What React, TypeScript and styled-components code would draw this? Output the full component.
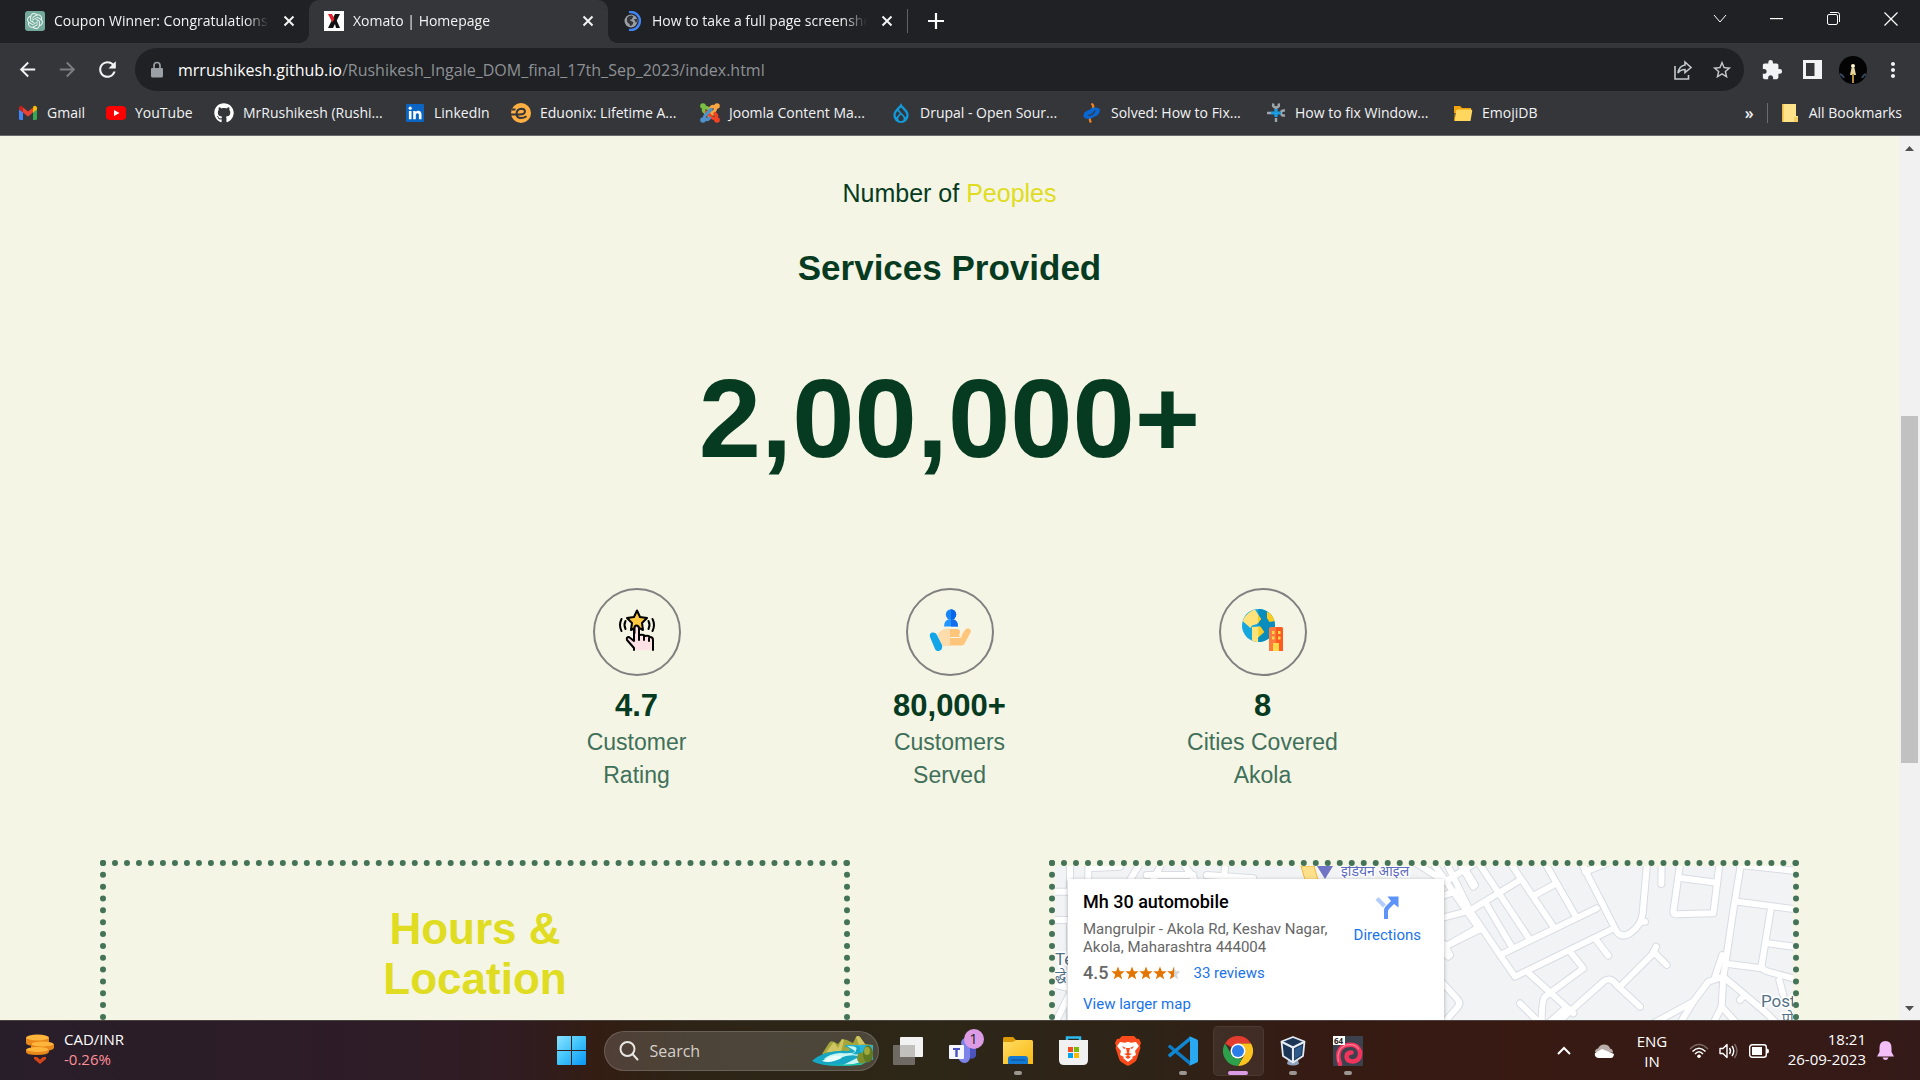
import React from 'react';
import styled, { createGlobalStyle } from 'styled-components';
import { SiOpenai, SiDrupal } from 'react-icons/si';
import { FaGithub } from 'react-icons/fa';
import { MdStarBorder, MdExtension, MdMoreVert, MdArrowBack, MdArrowForward, MdRefresh } from 'react-icons/md';

const Global = createGlobalStyle`
  * { box-sizing: border-box; }
  body { margin: 0; background: #f4f5e4; overflow: hidden; }
  button { border: 0; padding: 0; margin: 0; background: none; font: inherit; color: inherit; display: flex; align-items: center; justify-content: center; }
  input { border: 0; padding: 0; margin: 0; background: none; font: inherit; color: inherit; outline: 0; min-width: 0; }
  a { color: inherit; text-decoration: none; }
  h1, h2, h3, p { margin: 0; }
  svg { display: block; flex: none; }
`;

const ui = `"Open Sans", "Noto Sans", sans-serif`;
const sans = `"Liberation Sans", Arial, sans-serif`;

const Screen = styled.div`
  height: 100vh;
  display: flex;
  flex-direction: column;
  font-family: ${ui};
`;

/* ---------- browser chrome ---------- */
const TabStrip = styled.header`
  display: flex;
  height: 43px;
  padding-left: 10px;
  background: #202124;
  color: #f1f3f4;
  font-size: 14px;
`;
const Tab = styled.div<{ $active?: boolean }>`
  position: relative;
  display: flex;
  align-items: center;
  width: 299px;
  height: 43px;
  padding: 0 11px 2px 15px;
  gap: 9px;
  border-radius: 10px 10px 0 0;
  background: ${(p) => (p.$active ? '#35363a' : 'transparent')};
  &::before, &::after {
    content: ${(p) => (p.$active ? '""' : 'none')};
    position: absolute;
    bottom: 0;
    width: 10px;
    height: 10px;
  }
  &::before { left: -10px; background: radial-gradient(circle at 0 0, transparent 10px, #35363a 10px); }
  &::after { right: -10px; background: radial-gradient(circle at 100% 0, transparent 10px, #35363a 10px); }
`;
const TabTitle = styled.button`
  flex: 1;
  min-width: 0;
  overflow: hidden;
  white-space: nowrap;
  justify-content: flex-start;
  mask-image: linear-gradient(90deg, #000 calc(100% - 24px), transparent);
`;
const TabClose = styled.button`
  width: 18px;
  height: 18px;
  margin-left: 2px;
`;
const NewTab = styled.button`
  width: 56px;
  height: 41px;
`;
const TabDivider = styled.span`
  width: 1px;
  height: 24px;
  margin-top: 9px;
  background: #5f6368;
`;
const WindowControls = styled.div`
  display: flex;
  margin-left: auto;
  padding-right: 1px;
`;
const WindowButton = styled.button`
  width: 57px;
  height: 37px;
`;
const Toolbar = styled.div`
  display: flex;
  align-items: center;
  height: 53px;
  padding: 0 7px;
  background: #35363a;
  color: #f1f3f4;
`;
const ToolButton = styled.button<{ $dim?: boolean }>`
  width: 40px;
  height: 40px;
  color: ${(p) => (p.$dim ? '#7c7e82' : '#f1f3f4')};
`;
const Omnibox = styled.div`
  flex: 1;
  display: flex;
  align-items: center;
  height: 43px;
  margin: 0 8px;
  padding: 0 3px 0 13px;
  border-radius: 22px;
  background: #202124;
  color: #9aa0a6;
  font-size: 16px;
`;
const UrlHost = styled.label`
  margin-left: 12px;
  color: #fff;
`;
const UrlPath = styled.input`
  flex: 1;
  color: #8d9196;
`;
const OmniButton = styled.button`
  width: 39px;
  height: 40px;
  color: #c4c7cb;
`;
const Avatar = styled.button`
  width: 41px;
  height: 40px;
`;
const BookmarkBar = styled.nav`
  display: flex;
  align-items: center;
  height: 40px;
  padding: 0 18px 6px;
  background: #35363a;
  border-bottom: 1px solid #68696d;
  color: #f1f3f4;
  font-size: 14px;
  white-space: nowrap;
`;
const Bookmark = styled.a<{ $w?: number }>`
  display: flex;
  align-items: center;
  gap: 9px;
  width: ${(p) => (p.$w ? `${p.$w}px` : 'auto')};
`;
const Overflow = styled.button`
  margin-left: auto;
  font-size: 16px;
  font-weight: 600;
`;
const BarDivider = styled.span`
  width: 1px;
  height: 20px;
  margin: 0 13px;
  background: #6a6c70;
`;

/* ---------- page ---------- */
const Viewport = styled.div`
  flex: 1;
  min-height: 0;
  display: flex;
`;
const Page = styled.main`
  flex: 1;
  overflow: hidden;
  display: flex;
  flex-direction: column;
  align-items: center;
  padding: 42px 100px 0;
  background: #f4f5e4;
  color: #063b22;
  font-family: ${sans};
  text-align: center;
`;
const Lead = styled.p`
  font-size: 25px;
  line-height: 30px;
`;
const Accent = styled.span`
  color: #dfdc21;
`;
const Heading = styled.h2`
  margin-top: 40px;
  font-size: 35px;
  line-height: 40px;
`;
const Total = styled.p`
  margin-top: 67px;
  font-size: 112px;
  font-weight: 700;
  line-height: 128px;
`;
const Stats = styled.section`
  display: grid;
  grid-template-columns: repeat(3, 1fr);
  width: 939px;
  max-width: 100%;
  margin-top: 105px;
`;
const Stat = styled.article`
  display: flex;
  flex-direction: column;
  align-items: center;
`;
const Ring = styled.div`
  display: flex;
  align-items: center;
  justify-content: center;
  width: 88px;
  height: 88px;
  padding-bottom: 4px;
  border: 2px solid #808080;
  border-radius: 50%;
`;
const StatValue = styled.h3`
  margin: 12px 0 2px;
  font-size: 31px;
  line-height: 36px;
`;
const StatLabel = styled.p`
  color: #40705a;
  font-size: 23px;
  line-height: 33px;
`;
const Panels = styled.section`
  display: flex;
  align-self: stretch;
  gap: 199px;
  margin-top: 68px;
`;
const Panel = styled.div`
  flex: 1;
  min-width: 0;
  min-height: 480px;
  border: 6px dotted #457358;
`;
const PanelTitle = styled.h2`
  margin-top: 38px;
  color: #dfdc21;
  font-size: 44px;
  line-height: 50px;
`;
const MapPanel = styled(Panel)`
  position: relative;
  overflow: hidden;
  text-align: left;
  font-family: Roboto, sans-serif;
`;
const MapCard = styled.div`
  position: absolute;
  top: 13px;
  left: 13px;
  display: flex;
  justify-content: space-between;
  width: 376px;
  height: 160px;
  padding: 13px 23px 0 15px;
  background: #fff;
  box-shadow: 0 1px 4px rgba(0, 0, 0, 0.3);
  color: #666;
  font-size: 15px;
  line-height: 18px;
  white-space: nowrap;
`;
const PlaceName = styled.h3`
  margin-bottom: 8px;
  color: #000;
  font-size: 18px;
  font-weight: 500;
  line-height: 20px;
`;
const RatingRow = styled.div`
  display: flex;
  align-items: center;
  margin: 8px 0 13px;
`;
const Score = styled.span`
  margin-right: 3px;
  font-size: 18px;
  font-weight: 500;
`;
const MapLink = styled.a`
  color: #1a73e8;
`;
const Reviews = styled(MapLink)`
  margin-left: 12px;
`;
const Directions = styled(MapLink)`
  display: flex;
  flex-direction: column;
  align-items: center;
  gap: 6px;
  padding-top: 4px;
`;
const Scrollbar = styled.aside`
  display: flex;
  flex-direction: column;
  align-items: center;
  width: 21px;
  background: #f1f1f1;
`;
const ScrollArrow = styled.button`
  width: 21px;
  height: 24px;
`;
const ScrollTrack = styled.div`
  flex: 1;
  width: 17px;
  padding-top: 256px;
`;
const ScrollThumb = styled.div`
  height: 347px;
  background: #c1c1c1;
`;

/* ---------- taskbar ---------- */
const Taskbar = styled.footer`
  display: flex;
  align-items: center;
  justify-content: space-between;
  height: 60px;
  border-top: 1px solid #4a4340;
  background: linear-gradient(90deg, #281e29 0, #2e1c27 20%, #301c21 27%, #331d13 31%, #2d2416 36%, #2d2718 48%, #2e2317 60%, #351b13 68%, #381a13 80%, #341a18 100%);
  color: #fff;
  font-size: 15px;
  line-height: 20px;
`;
const Widget = styled.button`
  flex: 1 1 0;
  justify-content: flex-start;
  gap: 10px;
  padding: 0 0 4px 26px;
  text-align: left;
`;
const Drop = styled.span`
  color: #ff8e99;
`;
const Apps = styled.div`
  display: flex;
  align-items: center;
  padding-right: 2px;
`;
const AppButton = styled.button<{ $active?: boolean }>`
  position: relative;
  width: 51px;
  height: 50px;
  margin: 0 2px;
  border-radius: 5px;
  background: ${(p) => (p.$active ? 'rgba(255,255,255,0.07)' : 'none')};
  box-shadow: ${(p) => (p.$active ? 'inset 0 0 0 1px rgba(255,255,255,0.06)' : 'none')};
`;
const Running = styled.span<{ $active?: boolean }>`
  position: absolute;
  left: 50%;
  bottom: 1px;
  width: ${(p) => (p.$active ? 20 : 8)}px;
  height: 4px;
  border-radius: 2px;
  background: ${(p) => (p.$active ? '#dc9be5' : '#9b9690')};
  transform: translateX(-50%);
`;
const Badge = styled.span`
  position: absolute;
  top: 3px;
  right: 5px;
  width: 20px;
  height: 20px;
  border-radius: 50%;
  background: #dc9be5;
  color: #222;
  font-size: 14px;
  line-height: 20px;
  text-align: center;
`;
const SearchBox = styled.label`
  display: flex;
  align-items: center;
  width: 275px;
  height: 40px;
  margin: 0 2px 0 5px;
  padding: 0 4px 0 14px;
  gap: 11px;
  border: 1px solid rgba(255, 255, 255, 0.16);
  border-radius: 20px;
  background: rgba(255, 255, 255, 0.15);
`;
const SearchInput = styled.input`
  flex: 1;
  font-size: 16px;
  &::placeholder { color: #d4cfca; opacity: 1; }
`;
const Tray = styled.div`
  flex: 1 1 0;
  display: flex;
  align-items: center;
  justify-content: flex-end;
  padding-right: 25px;
`;
const TrayButton = styled.button<{ $w: number }>`
  width: ${(p) => p.$w}px;
  height: 40px;
  text-align: center;
`;
const Clock = styled.button`
  width: 92px;
  margin-right: 9px;
  padding-bottom: 4px;
  justify-content: flex-end;
  text-align: right;
  white-space: nowrap;
`;

/* ---------- drawings ---------- */
const Cross = () => (
  <svg width="12" height="12" viewBox="0 0 12 12" stroke="#f1f3f4" strokeWidth="2"><path d="M1.5 1.5l9 9M10.5 1.5l-9 9" /></svg>
);
const LockIcon = () => (
  <svg width="18" height="18" viewBox="0 0 18 18"><path d="M4 7h10q1 0 1 1v7q0 1.500-1.500 1.500h-9Q3 16.500 3 15V8q0-1 1-1z" fill="#9aa0a6" /><path d="M6 7V4.500q0-3 3-3t3 3V7" fill="none" stroke="#9aa0a6" strokeWidth="1.700" /></svg>
);
const OpenAiIcon = () => (
  <svg width="20" height="20" viewBox="0 0 20 20"><rect width="20" height="20" rx="3" fill="#74aa9c" /><SiOpenai x="2" y="2" size={16} color="#e6f4f0" /></svg>
);
const XomatoIcon = () => (
  <svg width="20" height="20" viewBox="0 0 20 20"><rect width="20" height="20" fill="#fff" /><path d="M11 3h5L9 17H4z" fill="#111" /><path d="M10 9l2-1 4 9h-4z" fill="#111" /><path d="M4 3h4l2.400 5-2 3.400z" fill="#e5202a" /></svg>
);
const GlobeIcon = () => (
  <svg width="20" height="20" viewBox="0 0 20 20"><circle cx="8" cy="10" r="6.500" fill="#9aa0a6" /><path d="M4 7c2-3 5-3 6-2s-1 2-1 3-2 0-2 1 2 1 3 2-1 4-3 4c0-3-3-3-3-5zM11 8l3 0c0 2 0 3-1 4z" fill="#35363a" /><path d="M6 1.200A9 9 0 1 1 6 18.800" fill="none" stroke="#4285f4" strokeWidth="2.400" /></svg>
);
const GmailIcon = () => (
  <svg width="20" height="20" viewBox="0 0 20 20"><path d="M1 5v10.500q0 1.500 1.500 1.500H5V8z" fill="#4285f4" /><path d="M19 5v10.500q0 1.500-1.500 1.500H15V8z" fill="#34a853" /><path d="M15 5.500V9.500l4-3V5c0-2-2.200-3-3.600-1.800z" fill="#fbbc04" /><path d="M5 9.500v-5l5 4 5-4v5l-5 4z" fill="#ea4335" /><path d="M1 5v1.500l4 3v-5L4.600 3.200C3.200 2 1 3 1 5z" fill="#c5221f" /></svg>
);
const YouTubeIcon = () => (
  <svg width="20" height="20" viewBox="0 0 20 20"><rect y="3" width="20" height="14" rx="4" fill="#f00" /><path d="M8 7l5.500 3L8 13z" fill="#fff" /></svg>
);
const LinkedInIcon = () => (
  <svg width="20" height="20" viewBox="0 0 20 20"><rect x="1" y="1" width="18" height="18" rx="1" fill="#0a66c2" /><g fill="#fff"><circle cx="5.200" cy="5.200" r="1.600" /><path d="M3.900 8h2.600v8.300H3.900zM8.200 8h2.500v1.200c1.400-2.300 5.800-1.900 5.800 2v5.100h-2.600V12c0-2.600-3.100-2.300-3.100 0v4.300H8.200z" /></g></svg>
);
const EduonixIcon = () => (
  <svg width="20" height="20" viewBox="0 0 20 20"><circle cx="10" cy="10" r="10" fill="#ffae42" /><path d="M0 11.500h8.500q5.500 0 5.500-3.200-.3-2.500-3.500-2.500Q6 6 5.500 10.500q0 4.500 4.500 4.500 3 0 5.500-1.800M1 6.500h3.500" fill="none" stroke="#35363a" strokeWidth="2" /></svg>
);
const JoomlaIcon = () => (
  <svg width="20" height="20" viewBox="0 0 20 20" fill="none" strokeWidth="3.300" strokeLinecap="round">
    <path d="M13.500 11L8 5.500Q5.500 3.500 4 5.500T5 9.500" stroke="#7ac143" /><path d="M9 13.500L14.500 8Q16.500 5.500 14.500 4T10.500 5" stroke="#f9a541" />
    <path d="M6.500 9L12 14.500Q14.500 16.500 16 14.500T15 10.500" stroke="#f44321" /><path d="M11 6.500L5.500 12Q3.500 14.500 5.500 16T9.500 15" stroke="#5091cd" />
    <g stroke="none"><circle cx="3" cy="3" r="2.800" fill="#7ac143" /><circle cx="17" cy="3" r="2.800" fill="#f9a541" /><circle cx="17" cy="17" r="2.800" fill="#f44321" /><circle cx="3" cy="17" r="2.800" fill="#5091cd" /></g>
  </svg>
);
const SolvedIcon = () => (
  <svg width="20" height="20" viewBox="0 0 20 20"><path d="M10.500 6Q12.500 3 9.500.5M8.500 14q-1.500 3 .5 5.500" fill="none" stroke="#f58220" strokeWidth="2.200" /><path d="M1.500 14c-.5-6 4.500-6 7-8 3-2 7-2 9.500.5-.5 6.500-4.500 6.500-7 8-3 2-6.500 2-9.500-.5z" fill="#0a66d0" /><path d="M6 12.500q5 0 7-5" fill="none" stroke="#35363a" strokeWidth="1.200" /></svg>
);
const WrenchIcon = () => (
  <svg width="20" height="20" viewBox="0 0 20 20" fill="none"><path d="M10 19v-4M10 7V4M7.500.5Q6 4 10 4.500 14 4 12.500.5M1 10h4M19 7.500Q15 7 15 10t4 2.500" stroke="#9fa6ab" strokeWidth="2.400" /><path d="M10 6v8M5 10h10" stroke="#1b9be0" strokeWidth="3.200" /></svg>
);
const FolderSmall = () => (
  <svg width="20" height="20" viewBox="0 0 20 20"><path d="M1 3h6l2 2h9v5H1z" fill="#f0a30a" /><path d="M3 8q.3-1.500 2-1.500h13q1.500 0 1.200 1.500L17.500 18H1.500z" fill="#ffd75e" /><path d="M1 6v12h1z" fill="#e59400" /></svg>
);
const NoteIcon = () => (
  <svg width="19" height="20" viewBox="0 0 19 20"><path d="M2 1h13v12h2v6H2z" fill="#ffe38a" /><path d="M13 14h4v5h-4z" fill="#f4ce60" /><path d="M1 1h1.500v18H1z" fill="#e8b93c" /></svg>
);
const ShareIcon = () => (
  <svg width="20" height="22" viewBox="0 0 20 22" fill="none" stroke="currentColor" strokeWidth="1.600"><path d="M2 7v13h13.500v-4" /><path d="M12 3l6 5.500-6 5V10.500Q7.500 10.500 5 14 6 7 12 6z" /></svg>
);
const PanelIcon = () => (
  <svg width="19" height="19" viewBox="0 0 19 19"><path fillRule="evenodd" d="M0 0h19v19H0zM3 3v13h8.500V3z" fill="#f1f3f4" /></svg>
);
const AvatarIcon = () => (
  <svg width="28" height="28" viewBox="0 0 28 28"><circle cx="14" cy="14" r="14" fill="#040404" /><path d="M1 18q3 1 4 4M27 18q-3 1-4 4" stroke="#34465e" strokeWidth="2" fill="none" /><circle cx="14" cy="10" r="2" fill="#fff5cd" /><path d="M12.500 12h3l1.500 7h-6z" fill="#e7d69a" /><path d="M13 18h2v9h-2z" fill="#b58e3c" /></svg>
);

const TapStar = () => (
  <svg width="42" height="42" viewBox="0 0 42 42" fill="none" stroke="#000" strokeWidth="2" strokeLinejoin="round" strokeLinecap="round">
    <g transform="translate(3 0)">
      <path d="M15 41v-2L8 31q-1-3 2-3l5 4V19q0-2.500 2.500-2.500t2.500 2.500v7q5-1 6 1 4-1 5 1 3 0 3 3v10" fill="#fde1e4" />
      <path d="M20 26v5M25 27v4M30 29v3" />
      <path d="M18 1.500l3 6.500 7 1-5 5 1 7-6-3.200-6 3.200 1-7-5-5 7-1z" fill="#fdc840" />
      <path d="M15.500 24v-5q0-2.500 2-2.500t2.500 2.500v5" fill="#fde1e4" />
      <path d="M6.500 12q-2 4 0 8M2.500 10q-3 6 0 12M29.500 12q2 4 0 8M33.500 10q3 6 0 12" />
    </g>
  </svg>
);
const HandPerson = () => (
  <svg width="42" height="42" viewBox="0 0 42 42">
    <circle cx="22" cy="5.500" r="5.200" fill="#1688f5" /><path d="M22 .3a5.200 5.200 0 0 1 0 10.400z" fill="#0a67e9" />
    <path d="M15 17.500q0-7.500 7-7.500t7 7.500z" fill="#2196ff" /><path d="M22 10q7 0 7 7.500h-7z" fill="#146bed" />
    <path d="M9 25q5-6 12-5h7q3 0 3 3l-1 4h2l4-6q2-2.500 4-1.500 2.500 1 1.500 4L36 34q-1 2.500-4 2.500H13z" fill="#ffc67b" /><path d="M9 25q5-6 12-5v16.500h-8z" fill="#ffdcac" />
    <path d="M21 28.500h9q2 0 3-2" stroke="#f4f5e4" strokeWidth="1.200" fill="none" />
    <path d="M1 28q-1-4 2.500-4.500Q7 23 8 26l5 10q1 5-3 6-3 .5-4-2z" fill="#12a5e8" />
  </svg>
);
const GlobeCity = () => (
  <svg width="42" height="42" viewBox="0 0 42 42">
    <circle cx="16.500" cy="16.500" r="16.500" fill="#17a7df" /><path d="M16.500 0a16.500 16.500 0 0 1 0 33z" fill="#0a8cbc" />
    <path d="M6 4.500q4-3.500 7-4l6 9.500-4 5-5 1.500-1.500 2.500L.6 12Q2 8 6 4.500z" fill="#ffe37a" /><path d="M16 6l3 4-3 4.500z" fill="#ffcc1d" /><path d="M25 2.500q6 3 7.500 9.500l-5 1-2.500-4z" fill="#ffcc1d" /><path d="M10 18l8-.5 4 5.500-6 5.500v4.500q-3 0-6-1.500v-7z" fill="#ffe37a" /><path d="M16.500 17.500h2l3.500 5.500-5.500 5z" fill="#ffcc1d" />
    <path d="M27 20q0-2 2-2h10q2 0 2 2v22H27z" fill="#ff7a3d" /><path d="M34 18h5q2 0 2 2v22h-7z" fill="#ff5a1f" />
    <path d="M30 22h2.500v3H30zM36 22h2.500v3H36zM30 27.500h2.500v3H30zM36 27.500h2.500v3H36zM31 34h6v8h-6z" fill="#ffd84a" />
  </svg>
);

const Star = ({ half }: { half?: boolean }) => (
  <svg width="14" height="14" viewBox="0 0 14 14">
    <path d="M7 .5l1.800 4.700 4.900.1-3.900 3.100 1.400 4.900L7 10.500l-4.200 2.800 1.400-4.900L.3 5.300l4.900-.1z" fill={half ? '#d5d5d5' : '#e37400'} />
    {half && <path d="M7 .5v10l-4.200 2.800 1.400-4.900L.3 5.300l4.900-.1z" fill="#e37400" />}
  </svg>
);
const DirectionsIcon = () => (
  <svg width="24" height="24" viewBox="0 0 24 24"><path d="M.5 4l3-3L11 8.500l-3 3z" fill="#b3cdfb" /><path d="M9 23V14q0-2 1.500-3.500l5.500-5.500L12.500.5H23.500V11.500L19 8l-5 5q-1 1-1 2.500V23z" fill="#5e93f7" /></svg>
);

const eastRoads = [
  'M20 40L90 182 180 315 225 380 515 238', 'M0 205L90 182 240 90', 'M0 140L45 125', 'M65 40L105 105', 'M110 30L265 262', 'M135 155L215 290',
  'M205 30L340 230', 'M310 30L405 195', 'M285 135L340 105', 'M180 315L470 175', 'M420 30L530 245Q545 265 570 250 605 225 608 190L622 30',
  'M435 65L500 40', 'M607 215h8', 'M665 30L664 102', 'M722 30L700 185Q700 195 712 193L820 190 840 30', 'M727 85L830 98', 'M905 30L880 180 855 350 850 380 845 470',
  'M900 45L1060 62', 'M893 155L1060 177', 'M992 180L965 345Q965 360 985 365L1060 385', 'M985 280L1060 290', 'M865 342L965 355', 'M1018 390L1030 435',
  'M850 380L805 395 760 455 640 520', 'M850 380L980 490 1010 520', 'M912 438L900 450', 'M760 455L720 520', 'M845 470L820 520M845 470L890 520', 'M847 315L825 380',
  'M0 390L50 445Q65 460 50 475L10 520', 'M10 280L30 315M15 290L115 240', 'M265 368L400 490', 'M390 305L430 355 315 440Q305 450 305 520', 'M325 520L370 480M350 520L490 395Q510 378 530 405L600 470',
  'M545 405L640 310 648 290M640 305L680 345', 'M465 265L505 317', 'M240 460L295 515',
];
const westRoads = [
  'M45 125H90V40M45 210H90V520', 'M45 405L90 415M45 520L90 430', 'M145 40V85M145 55L240 50', 'M270 90L300 40M340 90L365 40M320 75H460M430 40L465 90',
  'M550 90L555 55M500 75L640 85', 'M1130 40L1215 95 1320 30M1180 40L1320 240', 'M1260 40L1300 110', 'M1215 310L1225 320M1215 290L1320 230',
];
const MapDrawing = () => (
  <svg width="738" height="468" viewBox="0 0 738 468" aria-hidden="true">
    <rect width="738" height="468" fill="#f1f3f5" />
    {[{ c: '#d9dce3', w: 24 }, { c: '#ffffff', w: 18 }].map((s) => (
      <g key={s.c} fill="none" stroke={s.c} strokeWidth={s.w} strokeLinecap="round" strokeLinejoin="round">
        <g transform="translate(-15 -16) scale(.33333)">{westRoads.map((d) => <path key={d} d={d} />)}</g>
        <g transform="translate(385 -16) scale(.33333)">{eastRoads.map((d) => <path key={d} d={d} />)}</g>
      </g>
    ))}
    <path d="M246 0h13l4 14h-13z" fill="#fddf8c" stroke="#f5b731" />
    <path d="M262 0h16l-8 13z" fill="#6f74c4" />
    <g fontFamily='"Noto Sans", "Noto Sans Devanagari", sans-serif' fill="#5c6bc0" stroke="#fff" strokeWidth="3" paintOrder="stroke">
      <text x="286" y="10" fontSize="14">इंडियन आइल</text>
      <g fill="#557085">
        <text x="0" y="99" fontSize="17" fontFamily="Roboto, sans-serif">Te</text>
        <text x="0" y="115" fontSize="14">द्धे</text>
        <text x="706" y="141" fontSize="17" fontFamily="Roboto, sans-serif">Post</text>
        <text x="727" y="157" fontSize="14">पो</text>
      </g>
    </g>
  </svg>
);

const CoinsIcon = () => (
  <svg width="28" height="30" viewBox="0 0 28 30"><g fill="#e8871a"><path d="M0 4v5q0 3 11 3t12-3V4zM5 10v4q0 3 11 3t12-3v-4zM0 15v3q0 3 11 3t12-3v-3z" /></g><g fill="#ffb53c"><ellipse cx="11.500" cy="3.500" rx="11.500" ry="3" /><ellipse cx="16.500" cy="10" rx="11" ry="2.500" /><ellipse cx="11.500" cy="15.500" rx="11" ry="2.500" /></g><path d="M8 23h3l3 2.500 3-2.500h3v2l-6 5-6-5z" fill="#d4451b" /></svg>
);
const WindowsIcon = () => (
  <svg width="29" height="29" viewBox="0 0 29 29"><defs><linearGradient id="win" x2="1" y2="1"><stop stopColor="#8be2ff" /><stop offset=".5" stopColor="#3fc3fb" /><stop offset="1" stopColor="#0a96f5" /></linearGradient></defs><path d="M0 1q0-1 1-1h13v14H0zM15 0h13q1 0 1 1v13H15zM0 15h14v14H1q-1 0-1-1zM15 15h14v13q0 1-1 1H15z" fill="url(#win)" /></svg>
);
const SearchGlyph = () => (
  <svg width="20" height="20" viewBox="0 0 20 20" fill="none" stroke="#e9e6e2" strokeWidth="2"><circle cx="8.500" cy="8" r="7" /><path d="M13.500 13l5 5.500" strokeLinecap="round" /></svg>
);
const LakeIcon = () => (
  <svg width="62" height="30" viewBox="0 0 62 30">
    <path d="M10 18L17 7q2-3 5-1l4 2 4-5 5 1 6 3 3-6q2-2 4 0l5 7 8 1v14H20z" fill="#a4a53a" /><path d="M22 6l4 6 4-9 2 1-3 12H14zM44 1l3 8 6-1-5-7q-2-2-4 0z" fill="#d0c562" />
    <path d="M33 9h27q1 0 1 3v12L46 18 38 13z" fill="#25b6d8" /><path d="M32 10q18-1 16 3t8 6q5 2 2 6-10 5-30 5Q8 30 0 25q5-5 14-8 12-3 22-2 6-1-4-5z" fill="#16a7c4" />
    <path d="M35 10q12 0 9 4 0 3-5 4 16 0 14 6-9 5-22 5l16-8q-3-3-13-1-11 5-22 3 5-5 16-6 15 1 15-2z" fill="#c9f6f2" />
    <path d="M10 25q9-6 18-5 5 2-6 5-6 2-12 0z" fill="#eafffb" /><path d="M8 28q20 2 45-1l-4 2q-20 2-41-1z" fill="#1fc7a5" />
    <ellipse cx="50" cy="22" rx="5" ry="5.500" fill="#7f8f2b" /><ellipse cx="56" cy="18" rx="5" ry="8.500" fill="#5f7a22" /><ellipse cx="55" cy="15" rx="3" ry="4" fill="#a3a83a" />
  </svg>
);
const TaskViewIcon = () => (
  <svg width="30" height="28" viewBox="0 0 30 28"><rect x="7" y="0" width="23" height="20" rx="1" fill="#f2f2f2" /><rect x="0" y="8" width="22" height="20" rx="1" fill="#77736d" opacity=".9" /><rect x="7" y="8" width="15" height="12" fill="#c2c0bd" /></svg>
);
const TeamsIcon = () => (
  <svg width="28" height="26" viewBox="0 0 28 26"><circle cx="17" cy="5" r="5" fill="#7b83eb" /><path d="M18 9h9v9q-2 4-7 2z" fill="#4b53bc" /><path d="M9 9h12v11q-1 5-6 5-5-1-6-6z" fill="#7b83eb" /><rect y="7" width="15" height="14" rx="1" fill="#f6f6ff" /><path d="M4 10h7v2H8.700v7H6.300v-7H4z" fill="#4b53bc" /></svg>
);
const ExplorerIcon = () => (
  <svg width="30" height="27" viewBox="0 0 30 27"><defs><linearGradient id="fold" x2="1" y2="1"><stop stopColor="#ffdc63" /><stop offset="1" stopColor="#f9b912" /></linearGradient></defs><path d="M0 1.500Q0 0 1.500 0H10l3 3h15v6H0z" fill="#dd9a08" /><path d="M0 5h10l3-2h15.500Q30 3 30 4.500V27H0z" fill="url(#fold)" /><path d="M5 27v-5q0-3 3-3h14q3 0 3 3v5z" fill="#1379d3" /><path d="M8 23h14" stroke="#0a4f93" /></svg>
);
const StoreIcon = () => (
  <svg width="29" height="29" viewBox="0 0 29 29"><path d="M8 6V1.500h13V6" fill="none" stroke="#2cb9ec" strokeWidth="2.500" /><path d="M0 4h29v20q0 5-5 5H5q-5 0-5-5z" fill="#f1f1f1" /><path d="M9 11h5v5H9z" fill="#f25022" /><path d="M15 11h5v5h-5z" fill="#7fba00" /><path d="M9 17h5v5H9z" fill="#00a4ef" /><path d="M15 17h5v5h-5z" fill="#ffb900" /></svg>
);
const BraveIcon = () => (
  <svg width="26" height="30" viewBox="0 0 26 30"><path d="M7 0h12l3 3 2-.3L26 7l-1 3 .5 2-4 12q-1 2-8.500 6-7.500-4-8.500-6L.5 12 1 10 0 7l2-4.300 2 .3z" fill="#fb4a1b" /><path d="M5 6l5 .7 3-.9 3 .9L21 6l3 4-4 5 1 4-4 2 1 1-5 4-5-4 1-1-4-2 1-4-4-5z" fill="#fff" /><path d="M7 10l4 2-2 1zM19 10l-4 2 2 1zM11 12h4l-1 5 3 1-4 2-4-2 3-1zM10 21l3-1.500 3 1.500-3 2z" fill="#fb4a1b" /></svg>
);
const CodeIcon = () => (
  <svg width="30" height="30" viewBox="0 0 30 30"><path d="M2 8.500L22 25v4.500L0.500 11.500q-.8-1 0-1.800z" fill="#0e7cc5" /><path d="M22 5L2 21.500.5 20q-.8-1 0-1.800L22 .5z" fill="#1089d5" /><path d="M21 0l8 3.500q1 .5 1 1.500v20q0 1-1 1.500L21 30q1-.5 1-2V2q0-1.500-1-2z" fill="#2aa9f3" /></svg>
);
const ChromeIcon = () => (
  <svg width="30" height="30" viewBox="0 0 30 30"><path d="M15 15L2 7.500A15 15 0 0 1 28 7.500H15z" fill="#e33b2e" /><path d="M15 7.500h13A15 15 0 0 1 15 30l6.500-11.200z" fill="#fcc31e" /><path d="M2 7.500l6.500 11.200L15 22.500h4.300L15 30A15 15 0 0 1 2 7.500z" fill="#2da04b" /><circle cx="15" cy="15" r="7.500" fill="#fff" /><circle cx="15" cy="15" r="6" fill="#2b7de9" /></svg>
);
const VirtualBoxIcon = () => (
  <svg width="26" height="30" viewBox="0 0 26 30"><path d="M8 24h10l1 4q-6 3-12 0z" fill="#8fa3bf" /><path d="M13 1l11.500 4.500L23 20l-10 6.500L3 20 1.500 5.500z" fill="#1b3557" stroke="#e4ebf3" strokeWidth="1.800" strokeLinejoin="round" /><path d="M2 6l11 5.500L24 6M13 11.500V26" fill="none" stroke="#e4ebf3" strokeWidth="2.200" /><path d="M15 13l7-3.500-1 9.500-6 4z" fill="#2d5b8c" /></svg>
);
const SwirlIcon = () => (
  <svg width="30" height="30" viewBox="0 0 30 30"><rect width="30" height="30" rx="1" fill="#3b424e" /><path d="M7 28Q2 14 12 9.500q12-3 15 6 1 9-7 10-6 0-6.500-5 .5-4 5-4" fill="none" stroke="#f2335d" strokeWidth="4.500" strokeLinecap="round" /><path d="M5.500 26Q3 14 12 9.500q10-3 14 4" fill="none" stroke="#ff7d92" strokeWidth="1.200" /><rect width="12" height="9" fill="#fff" /><text x="1" y="8" fontSize="8" fontWeight="700" fontFamily="Open Sans, sans-serif" fill="#222">64</text></svg>
);
const WifiIcon = () => (
  <svg width="20" height="16" viewBox="0 0 20 16" fill="none" stroke="#fff" strokeWidth="1.500"><path d="M1 6Q10-3 19 6" opacity=".35" /><path d="M3.500 8.500Q10 1.800 16.500 8.500M6 11Q10 6.500 14 11" /><circle cx="10" cy="13.300" r="1.800" fill="#fff" stroke="none" /></svg>
);
const VolumeIcon = () => (
  <svg width="20" height="16" viewBox="0 0 20 16" fill="none" stroke="#fff" strokeWidth="1.400" strokeLinejoin="round"><path d="M1 5.500h3L8 1.500v13L4 10.500H1z" /><path d="M10.500 5q2 3 0 6M13 3q3.500 5 0 10" /><path d="M15.500 1q5 7 0 14" opacity=".35" /></svg>
);
const BatteryIcon = () => (
  <svg width="20" height="14" viewBox="0 0 20 14"><rect x=".7" y=".7" width="16.600" height="12.600" rx="2.500" fill="none" stroke="#fff" strokeWidth="1.400" /><rect x="3" y="3" width="10" height="8" fill="#fff" /><path d="M18 4.500q2 0 2 2.500t-2 2.500z" fill="#fff" /></svg>
);

const bookmarks = [
  { label: 'Gmail', icon: <GmailIcon />, w: 88 },
  { label: 'YouTube', icon: <YouTubeIcon />, w: 108 },
  { label: 'MrRushikesh (Rushi...', icon: <FaGithub size={20} color="#fff" />, w: 191 },
  { label: 'LinkedIn', icon: <LinkedInIcon />, w: 106 },
  { label: 'Eduonix: Lifetime A...', icon: <EduonixIcon />, w: 189 },
  { label: 'Joomla Content Ma...', icon: <JoomlaIcon />, w: 191 },
  { label: 'Drupal - Open Sour...', icon: <SiDrupal size={20} color="#1299da" />, w: 191 },
  { label: 'Solved: How to Fix...', icon: <SolvedIcon />, w: 184 },
  { label: 'How to fix Window...', icon: <WrenchIcon />, w: 187 },
  { label: 'EmojiDB', icon: <FolderSmall />, w: 88 },
];

const apps = [
  { name: 'Task view', icon: <TaskViewIcon /> },
  { name: 'Teams', icon: <TeamsIcon />, badge: '1' },
  { name: 'File Explorer', icon: <ExplorerIcon />, running: true },
  { name: 'Microsoft Store', icon: <StoreIcon /> },
  { name: 'Brave', icon: <BraveIcon /> },
  { name: 'Visual Studio Code', icon: <CodeIcon />, running: true },
  { name: 'Google Chrome', icon: <ChromeIcon />, running: true, active: true },
  { name: 'VirtualBox', icon: <VirtualBoxIcon />, running: true },
  { name: 'Debian', icon: <SwirlIcon />, running: true },
];

const stats = [
  { icon: <TapStar />, value: '4.7', lines: ['Customer', 'Rating'] },
  { icon: <HandPerson />, value: '80,000+', lines: ['Customers', 'Served'] },
  { icon: <GlobeCity />, value: '8', lines: ['Cities Covered', 'Akola'] },
];

const tabs = [
  { title: 'Coupon Winner: Congratulations', icon: <OpenAiIcon /> },
  { title: 'Xomato | Homepage', icon: <XomatoIcon />, active: true },
  { title: 'How to take a full page screenshot', icon: <GlobeIcon /> },
];

export default function App() {
  return (
    <Screen>
      <Global />
      <TabStrip>
        {tabs.map((t) => (
          <Tab key={t.title} $active={t.active}>
            {t.icon}
            <TabTitle>{t.title}</TabTitle>
            <TabClose aria-label="Close tab"><Cross /></TabClose>
          </Tab>
        ))}
        <TabDivider />
        <NewTab aria-label="New tab">
          <svg width="16" height="16" viewBox="0 0 16 16" stroke="#fff" strokeWidth="2.200"><path d="M8 0v16M0 8h16" /></svg>
        </NewTab>
        <WindowControls>
          <WindowButton aria-label="Search tabs"><svg width="14" height="9" viewBox="0 0 14 9" fill="none" stroke="#fff"><path d="M1 1l6 7 6-7" /></svg></WindowButton>
          <WindowButton aria-label="Minimize"><svg width="13" height="2" viewBox="0 0 13 2"><path d="M0 0h13v1.200H0z" fill="#fff" /></svg></WindowButton>
          <WindowButton aria-label="Restore"><svg width="13" height="13" viewBox="0 0 13 13" fill="none" stroke="#fff"><rect x=".5" y="2.500" width="10" height="10" rx="1.500" /><path d="M3 .5h7.500q2 0 2 2V10" /></svg></WindowButton>
          <WindowButton aria-label="Close"><svg width="14" height="14" viewBox="0 0 14 14" stroke="#fff" strokeWidth="1.200"><path d="M.5.5l13 13M13.500.5l-13 13" /></svg></WindowButton>
        </WindowControls>
      </TabStrip>

      <Toolbar>
        <ToolButton aria-label="Back"><MdArrowBack size={23} /></ToolButton>
        <ToolButton aria-label="Forward" $dim><MdArrowForward size={23} /></ToolButton>
        <ToolButton aria-label="Reload"><MdRefresh size={25} /></ToolButton>
        <Omnibox>
          <LockIcon />
          <UrlHost htmlFor="url">mrrushikesh.github.io</UrlHost>
          <UrlPath id="url" defaultValue="/Rushikesh_Ingale_DOM_final_17th_Sep_2023/index.html" />
          <OmniButton aria-label="Share"><ShareIcon /></OmniButton>
          <OmniButton aria-label="Bookmark this page"><MdStarBorder size={22} /></OmniButton>
        </Omnibox>
        <ToolButton aria-label="Extensions"><MdExtension size={22} /></ToolButton>
        <ToolButton aria-label="Side panel"><PanelIcon /></ToolButton>
        <Avatar aria-label="Profile"><AvatarIcon /></Avatar>
        <ToolButton aria-label="Menu"><MdMoreVert size={24} /></ToolButton>
      </Toolbar>

      <BookmarkBar>
        {bookmarks.map((b) => (
          <Bookmark key={b.label} href="#" $w={b.w}>{b.icon}{b.label}</Bookmark>
        ))}
        <Overflow aria-label="More bookmarks">»</Overflow>
        <BarDivider />
        <Bookmark href="#"><NoteIcon />All Bookmarks</Bookmark>
      </BookmarkBar>

      <Viewport>
        <Page>
          <Lead>Number of <Accent>Peoples</Accent></Lead>
          <Heading>Services Provided</Heading>
          <Total>2,00,000+</Total>
          <Stats>
            {stats.map((s) => (
              <Stat key={s.value}>
                <Ring>{s.icon}</Ring>
                <StatValue>{s.value}</StatValue>
                <StatLabel>{s.lines[0]}<br />{s.lines[1]}</StatLabel>
              </Stat>
            ))}
          </Stats>
          <Panels>
            <Panel><PanelTitle>Hours &amp;<br />Location</PanelTitle></Panel>
            <MapPanel>
              <MapDrawing />
              <MapCard>
                <div>
                  <PlaceName>Mh 30 automobile</PlaceName>
                  <p>Mangrulpir - Akola Rd, Keshav Nagar,<br />Akola, Maharashtra 444004</p>
                  <RatingRow>
                    <Score>4.5</Score>
                    <Star /><Star /><Star /><Star /><Star half />
                    <Reviews href="#">33 reviews</Reviews>
                  </RatingRow>
                  <MapLink href="#">View larger map</MapLink>
                </div>
                <Directions href="#"><DirectionsIcon />Directions</Directions>
              </MapCard>
            </MapPanel>
          </Panels>
        </Page>
        <Scrollbar>
          <ScrollArrow aria-label="Scroll up"><svg width="9" height="5" viewBox="0 0 9 5"><path d="M0 5l4.500-5L9 5z" fill="#505050" /></svg></ScrollArrow>
          <ScrollTrack><ScrollThumb /></ScrollTrack>
          <ScrollArrow aria-label="Scroll down"><svg width="9" height="5" viewBox="0 0 9 5"><path d="M0 0l4.500 5L9 0z" fill="#505050" /></svg></ScrollArrow>
        </Scrollbar>
      </Viewport>

      <Taskbar>
        <Widget><CoinsIcon /><span>CAD/INR<br /><Drop>-0.26%</Drop></span></Widget>
        <Apps>
          <AppButton aria-label="Start"><WindowsIcon /></AppButton>
          <SearchBox><SearchGlyph /><SearchInput placeholder="Search" aria-label="Search" /><LakeIcon /></SearchBox>
          {apps.map((a) => (
            <AppButton key={a.name} aria-label={a.name} $active={a.active}>
              {a.icon}
              {a.badge && <Badge>{a.badge}</Badge>}
              {a.running && <Running $active={a.active} />}
            </AppButton>
          ))}
        </Apps>
        <Tray>
          <TrayButton $w={48} aria-label="Show hidden icons"><svg width="14" height="9" viewBox="0 0 14 9" fill="none" stroke="#fff" strokeWidth="2"><path d="M1 8l6-6 6 6" /></svg></TrayButton>
          <TrayButton $w={32} aria-label="OneDrive"><svg width="20" height="14" viewBox="0 0 20 14"><path d="M1 8q0-3 3-3.500Q6 .500 10 .5q5 0 6 4 3 .5 3 4z" fill="#b9aeab" /><path d="M1 9l7-4 12 5q-.5 4-3 4H4q-4-1-3-5z" fill="#fff" /></svg></TrayButton>
          <TrayButton $w={64}>ENG<br />IN</TrayButton>
          <TrayButton $w={30} aria-label="Network"><WifiIcon /></TrayButton>
          <TrayButton $w={30} aria-label="Volume"><VolumeIcon /></TrayButton>
          <TrayButton $w={30} aria-label="Battery"><BatteryIcon /></TrayButton>
          <Clock>18:21<br />26-09-2023</Clock>
          <TrayButton $w={20} aria-label="Notifications"><svg width="17" height="19" viewBox="0 0 17 19"><path d="M8.500 0q6 0 6 7v4l2.500 4.500H0L2.500 11V7q0-7 6-7z" fill="#f3bdf8" /><path d="M5.500 16.500h6q-1 2.500-3 2.500t-3-2.500z" fill="#f3bdf8" /></svg></TrayButton>
        </Tray>
      </Taskbar>
    </Screen>
  );
}
